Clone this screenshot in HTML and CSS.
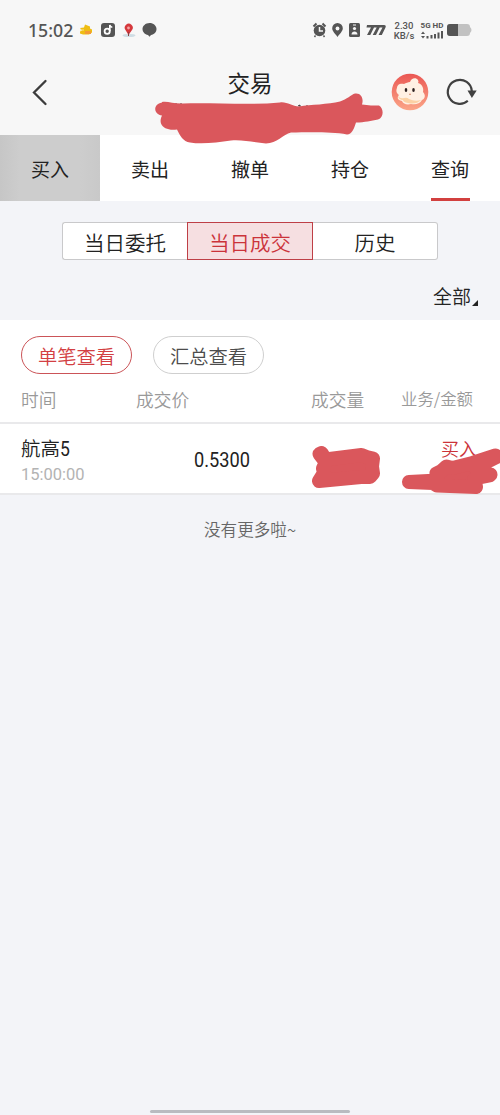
FILE: index.html
```html
<!DOCTYPE html>
<html lang="zh-CN">
<head>
<meta charset="utf-8">
<title>交易</title>
<link rel="stylesheet" href="styles.css">
</head>
<body>
<div class="screen">
  <div class="status">
    <span class="clock">15:02</span>
    <svg class="status-left" width="82" height="20" viewBox="78 20 82 20">
      <path d="M80 28l4-.5 1-3 5 2v2l2 1v3l-3 2h-6l-3-1v-2l2-1z" fill="#efbd13"/><path d="M85 31h6v3h-6z" fill="#f39a35"/><path d="M80 30h4" stroke="#fbe48c"/>
      <rect x="101" y="23" width="14" height="14" rx="3" fill="#555"/>
      <circle cx="107.200" cy="31.300" r="2.600" fill="none" stroke="#fff" stroke-width="1.800"/><path d="M109.800 31v-6q.5 2 2.500 2.200" fill="none" stroke="#fff" stroke-width="1.600"/>
      <ellipse cx="129" cy="35.500" rx="6.500" ry="1.600" fill="#cfdde4"/><path d="M128.500 35l-3-5a4 4 0 1 1 6.500 0z" fill="#d5383c"/><circle cx="128.500" cy="28" r="1.400" fill="#f5a3a3"/><path d="M128.500 32v4" stroke="#8c4144"/>
      <path d="M149.500 23c4 0 7 2.700 7 6s-2.500 5.400-5.500 6l-1.500 1.700-1.500-1.700c-3-.5-5.500-3-5.500-6s3-6 7-6z" fill="#555"/>
    </svg>
    <svg class="status-right" width="76" height="20" viewBox="311 20 76 20">
      <circle cx="319.500" cy="30.500" r="5.800" fill="#555"/><path d="M319.500 27v4h3.500" fill="none" stroke="#f7f7f7" stroke-width="1.500"/><path d="M315.500 35.500l-1 1.500M323.500 35.500l1 1.500" fill="none" stroke="#555" stroke-width="1.400"/><path d="M313.500 26.500l3-3M325.500 26.500l-3-3" stroke="#555" stroke-width="2"/>
      <path d="M337.500 37c-2-3-5.300-5.500-5.300-8.700a5.300 5.300 0 0 1 10.600 0c0 3.200-3.300 5.700-5.300 8.700z" fill="#555"/><circle cx="337.500" cy="28.500" r="1.900" fill="#f7f7f7"/>
      <rect x="349" y="23" width="11" height="14" rx="1.500" fill="#555"/><circle cx="354.500" cy="28.500" r="1.600" fill="#f7f7f7"/><path d="M351.500 34.500c0-4 6-4 6 0zM353 24.500h3v1h-3z" fill="#f7f7f7"/>
      <path d="M367 25h17q2.500 0 1.500 2.500l-3.700 7.500h-3.300l4-7.500h-2.800l-3.700 7.500h-3.300l4-7.500h-2.700l-3.700 7.500h-3.300l4-7.500h-4.500z" fill="#555"/>
    </svg>
    <div class="speed"><span>2.30</span><span>KB/s</span></div>
    <div class="network">
      <span>5G HD</span>
      <svg width="22" height="8" viewBox="0 0 22 8"><path d="M0 3l2-2.500 2 2.500zM0 5l2 2.500 2-2.500z" fill="#555"/><path d="M6.500 5v2.500M10.500 4v3.500M14 3v4.500M17.500 1.500v6M21 0v7.500" stroke="#555" stroke-width="2"/></svg>
    </div>
    <svg class="battery" width="25" height="14" viewBox="0 0 25 14"><rect x="0" y="1" width="23" height="12" rx="3" fill="#c2c2c2"/><path d="M3 1h8v12H3q-3 0-3-3V4q0-3 3-3z" fill="#555"/><path d="M23 4q3 3 0 6z" fill="#c2c2c2"/></svg>
  </div>

  <header class="header">
    <svg class="back" width="18" height="28" viewBox="0 0 18 28"><path d="M14.500 3L3 14.500 14.500 26" fill="none" stroke="#3c3c3c" stroke-width="2.300" stroke-linecap="round"/></svg>
    <h1 class="title">交易</h1>
    <svg class="avatar" width="38" height="38" viewBox="0 0 38 38">
      <defs><linearGradient id="coral" x1="0" y1="0" x2="0" y2="1"><stop offset="0" stop-color="#ea5753"/><stop offset="1" stop-color="#fba688"/></linearGradient></defs>
      <circle cx="19" cy="19" r="18.300" fill="url(#coral)"/>
      <path d="M6 15c0-4 4-5 7-4 2-1 4-2 6-2 1-4 6-5 8-2q1 2 0 3c4 1 6 5 5 9 3 3 2 7-1 8-2 4-7 5-11 4-4 1-8 0-9-3-5-1-5-4-3-6-3-2-3-5-2-7z" fill="#fff0e3"/>
      <path d="M7 23q2 3 6 2 3-1 5 1 6 3 12 1-5 5-13 3-5-1-5-3-4 0-5-4z" fill="#fcd1a4"/>
      <ellipse cx="15" cy="17" rx="1.300" ry="2" fill="#2d2020"/><ellipse cx="22.500" cy="17" rx="1.300" ry="2" fill="#2d2020"/><path d="M18 21q1 1 2 0" fill="none" stroke="#d98c70"/>
    </svg>
    <svg class="refresh" width="32" height="30" viewBox="445 77 32 30"><path d="M467.800 100.800A12 12 0 1 1 471.800 91" fill="none" stroke="#414141" stroke-width="2.200"/><path d="M467.500 90.500h9.200l-4.800 7.500z" fill="#414141"/></svg>
    <svg class="mask" width="232" height="56" viewBox="153 91 232 56">
      <path d="M176 103v2M181 103v2M298 106l2-1v3M307 105v3" fill="none" stroke="#333" stroke-width="1"/>
      <path d="M162 102c6-1 12 2 21 1.500 32-1 66 2 97-1 7-1 12 4 19 4 12-2 29-2 41-5 7-2 11-7 15-8 6-1 9 5 7 11 6 1 12 1 17 1 5 3 5 12-1 14-7 1-13 3-22 3-2 6-4 12-9 12-16-3-40-2-56-2-8 2-14 11-25 11-12-1-23-4-35-3-14 2-29 4-41 2-7-1-10-7-13-13-8 1-14-1-16-6-1-3 0-6 1-8-8-1-10-11 0-13z" fill="#da575c"/>
    </svg>
  </header>

  <nav class="tabs">
    <a class="tab tab-pressed">买入</a><a class="tab">卖出</a><a class="tab">撤单</a><a class="tab">持仓</a><a class="tab tab-current">查询</a>
  </nav>

  <section class="filters">
    <div class="segments"><span class="segment">当日委托</span><span class="segment segment-on">当日成交</span><span class="segment">历史</span></div>
    <div class="scope">全部<svg width="6" height="6" viewBox="0 0 6 6"><path d="M6 0v6H0z" fill="#222"/></svg></div>
  </section>

  <main class="list">
    <div class="pills"><span class="pill pill-on">单笔查看</span><span class="pill">汇总查看</span></div>
    <div class="columns"><span>时间</span><span>成交价</span><span>成交量</span><span class="col-amount">业务/金额</span></div>
    <div class="row">
      <div class="stock"><span class="name">航高<span class="digit">5</span></span><span class="time">15:00:00</span></div>
      <span class="price">0.5300</span>
      <span class="side">买入</span>
      <svg class="row-mask" width="190" height="50" viewBox="310 446 190 50" fill="#da575c" stroke="#da575c" stroke-width="14" stroke-linejoin="round">
        <path d="M319.500 454l2-1 4 6.500 36-4.500 5 2 6.500 1.500-1 8 1 7-3 3.500-9 0-42 4 5-8-1-4.500 3-6z"/>
        <path d="M409 482l29-1.500-1.500-7 5-2.500 5-4.500 6 1.500 20-5 23-7.500v2l-20 10 4 6 11 1-1 1-15 3 1.500 8.500-39-1.500-4-2.500z"/>
      </svg>
    </div>
  </main>

  <p class="end">没有更多啦~</p>
  <div class="home-bar"></div>
</div>
</body>
</html>
```
FILE: styles.css
```css
* { box-sizing: border-box; }
body { margin: 0; font-family: "Noto Sans CJK SC", sans-serif; font-weight: 350; color: #222; background: #f3f4f8; }
svg { display: block; flex: none; }
.screen { width: 500px; height: 1115px; display: flex; flex-direction: column; overflow: hidden; }

.status { height: 60px; flex: none; display: flex; align-items: center; padding-left: 28px; background: #f7f7f7; color: #555; }
.clock { width: 50px; font: 500 17.700px/20px "Noto Sans", sans-serif; white-space: nowrap; }
.status-right { margin-left: 151px; }
.speed { width: 22px; margin-left: 6px; display: flex; flex-direction: column; align-items: center; gap: 1px; font: 500 9.5px/9px Roboto, sans-serif; }
.network { width: 24px; margin-left: 5px; display: flex; flex-direction: column; align-items: center; gap: 1px; font: 700 8px/8px Roboto, sans-serif; white-space: nowrap; }
.battery { margin-left: 3px; }

.header { position: relative; height: 75px; flex: none; display: flex; align-items: flex-start; padding: 0 24px 0 30px; background: #f7f7f7; }
.back { margin: 18px 0 0 1px; }
.title { flex: 1; margin: 8px 0 0; padding-left: 60px; text-align: center; font-size: 22.5px; line-height: 29px; font-weight: 400; }
.avatar { margin: 13px 0 0; }
.refresh { margin: 17px -1px 0 16px; }
.mask { position: absolute; left: 153px; top: 31px; }

.tabs { height: 66px; flex: none; display: grid; grid-template-columns: repeat(5, 1fr); background: #fff; font-weight: 400; }
.tab { display: flex; align-items: center; justify-content: center; font-size: 19px; }
.tab-pressed { background: linear-gradient(90deg, #c6c6c6, #cdcdcd 20%, #cdcdcd 80%, #c9c9c9); }
.tab-current { background: linear-gradient(#d2403f, #d2403f) center bottom / 39px 3px no-repeat; }

.filters { height: 119px; flex: none; display: flex; flex-direction: column; padding: 21px 22px 0 62px; }
.segments { width: 376px; height: 38px; display: grid; grid-template-columns: 125px 126px 125px; background: #fff; border-radius: 3px; }
.segment { display: flex; align-items: center; justify-content: center; border: 1px solid #c9c9cb; font-size: 20.5px; padding-top: 1px; }
.segment:first-child { border-right: 0; border-radius: 3px 0 0 3px; }
.segment:last-child { border-left: 0; border-radius: 0 3px 3px 0; }
.segment-on { background: #f6dfe1; border-color: #be3f46; color: #cb333a; }
.scope { align-self: flex-end; display: flex; align-items: flex-end; gap: 1px; margin-top: 22px; font-size: 19px; line-height: 28px; }
.scope svg { margin-bottom: 4px; }

.list { flex: none; background: #fff; border-bottom: 2px solid #e9e9eb; }
.pills { display: flex; gap: 21px; padding: 16px 21px 0; }
.pill { width: 111px; height: 38px; display: flex; align-items: center; justify-content: center; border: 1px solid #cfcfcf; border-radius: 19px; font-size: 19.3px; padding-top: 1px; color: #4c4c4c; }
.pill-on { border-color: #cb5458; color: #d33f43; }
.columns { height: 50px; display: grid; grid-template-columns: 115px 175px 90px 72px; padding: 12px 0 0 21px; border-bottom: 2px solid #e9e9eb; font-size: 17.7px; line-height: 26px; color: #999; white-space: nowrap; }
.col-amount { font-size: 16.4px; line-height: 25px; }
.row { position: relative; height: 69px; display: grid; grid-template-columns: 173px 200px 103px; padding-left: 21px; }
.stock { display: flex; flex-direction: column; padding-top: 10px; }
.name { font-size: 19.5px; line-height: 28px; }
.digit { display: inline-block; font-family: Roboto, sans-serif; font-weight: 400; transform: scaleX(.9); transform-origin: left; }
.time { font: 400 16.5px/22px Roboto, sans-serif; color: #b3b3b3; }
.price { font: 400 20px/28px Roboto, sans-serif; padding-top: 22px; transform: scaleX(.91); transform-origin: left; }
.side { padding: 10px 0 0 47px; font-size: 18px; line-height: 28px; color: #cb3339; white-space: nowrap; }
.row-mask { position: absolute; left: 310px; top: 22px; }

.end { margin: 21px 0 0; text-align: center; font-size: 16.6px; line-height: 26px; color: #666; }
.home-bar { width: 200px; height: 3px; margin: auto auto 2px; border-radius: 2px; background: #b9bbc0; }
```
